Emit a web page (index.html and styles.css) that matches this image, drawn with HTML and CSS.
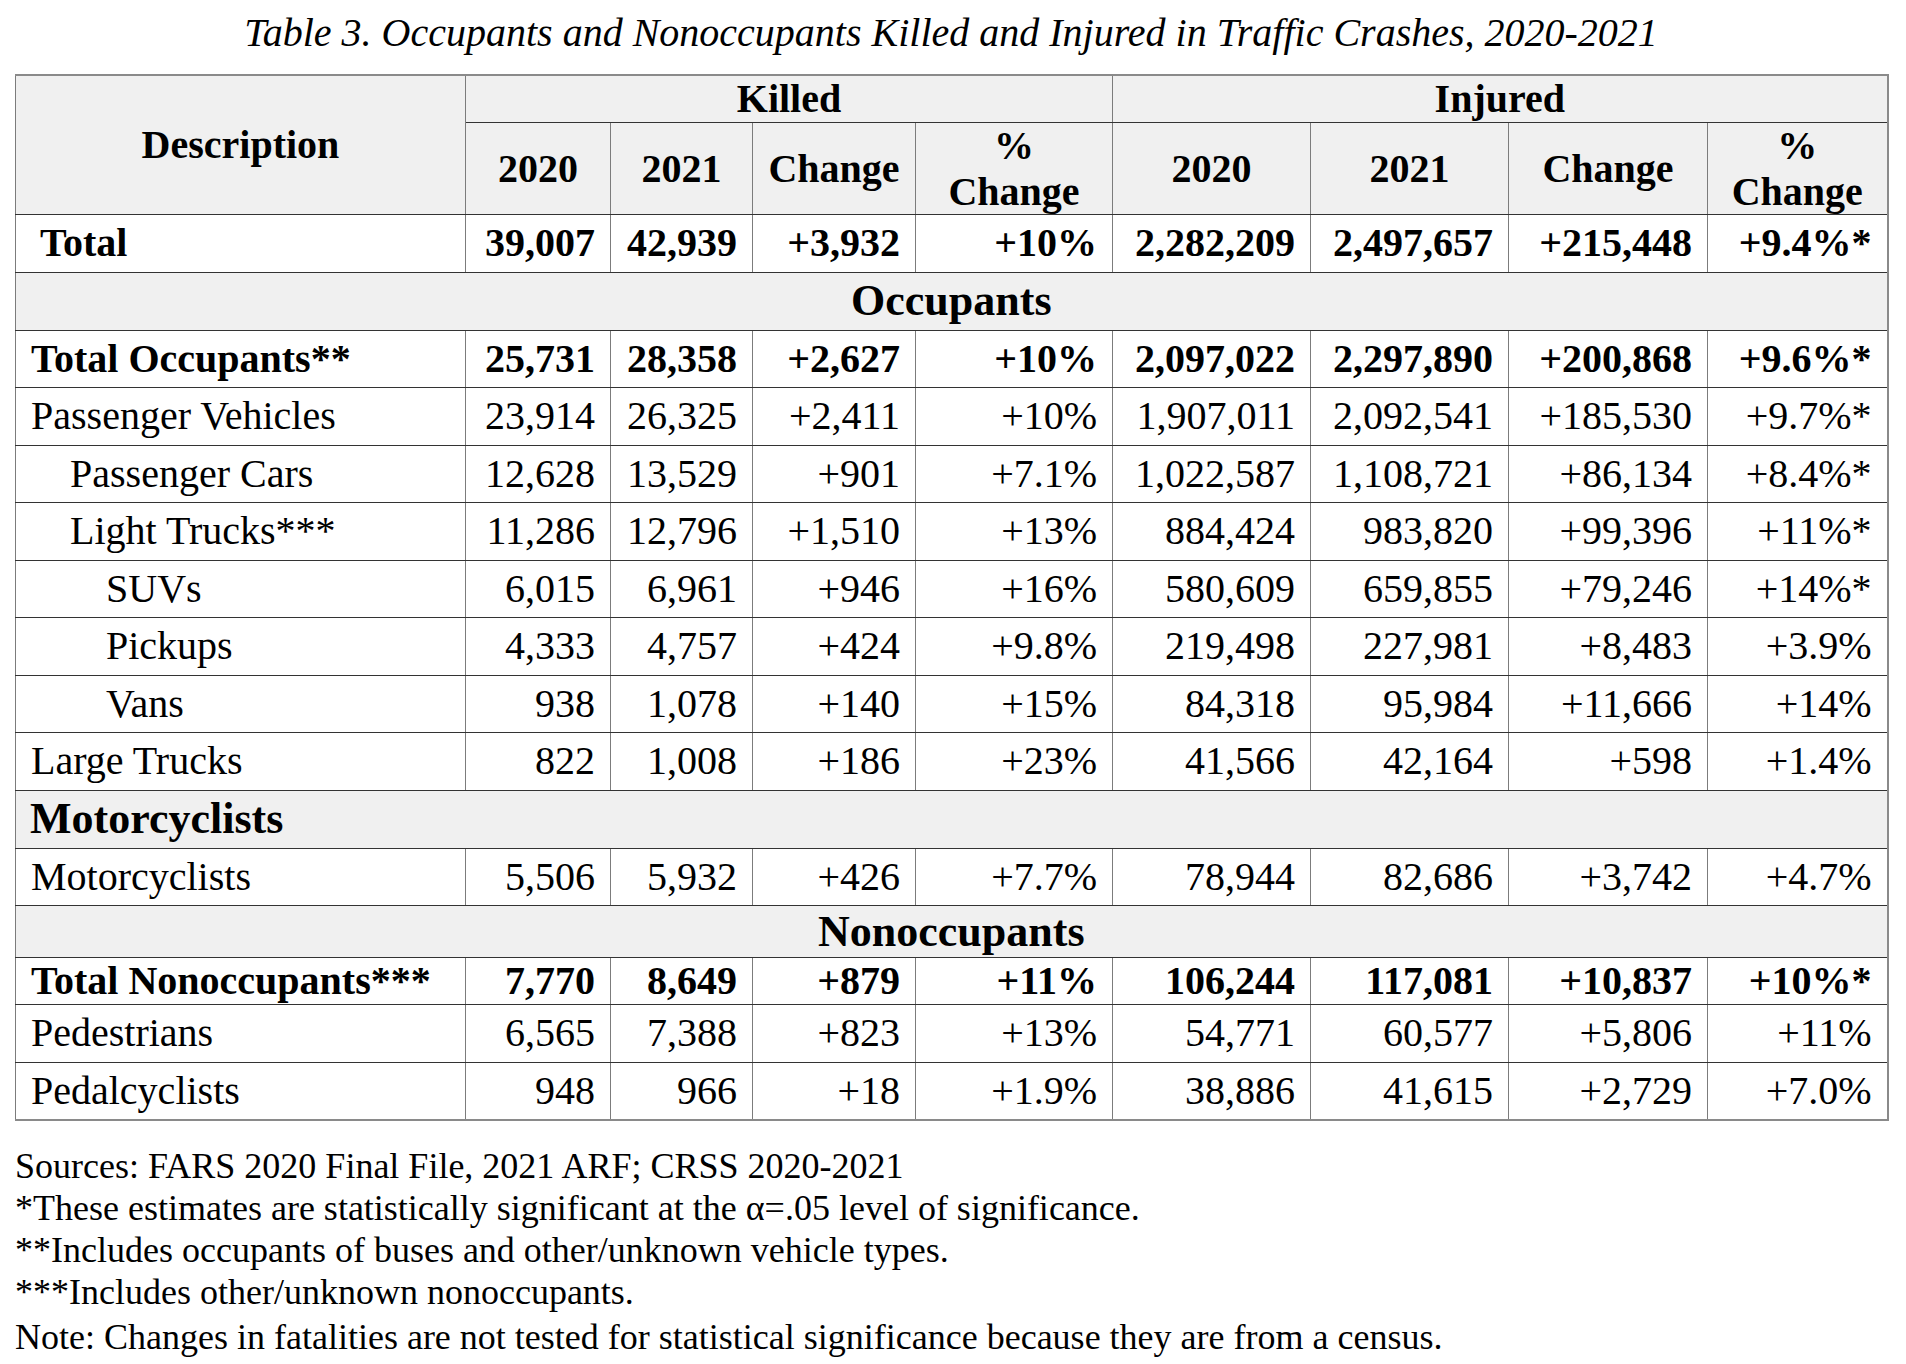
FILE: index.html
```html
<!DOCTYPE html>
<html lang="en">
<head>
  <meta charset="UTF-8" />
  <meta name="viewport" content="width=device-width, initial-scale=1.0" />
  <title>Table 3. Occupants and Nonoccupants Killed and Injured in Traffic Crashes, 2020-2021</title>
  <link rel="stylesheet" href="styles.css">
</head>
<body>
  <div class="page">
    <div class="caption">Table 3. Occupants and Nonoccupants Killed and Injured in Traffic Crashes, 2020-2021</div>

    <table class="crash-table">
      <colgroup>
        <col class="c-desc">
        <col class="c-k20">
        <col class="c-k21">
        <col class="c-kch">
        <col class="c-kpct">
        <col class="c-i20">
        <col class="c-i21">
        <col class="c-ich">
        <col class="c-ipct">
      </colgroup>
      <thead>
        <tr class="head-top">
          <th rowspan="2">Description</th>
          <th colspan="4">Killed</th>
          <th colspan="4">Injured</th>
        </tr>
        <tr class="head-sub">
          <th>2020</th>
          <th>2021</th>
          <th>Change</th>
          <th>%<br>Change</th>
          <th>2020</th>
          <th>2021</th>
          <th>Change</th>
          <th>%<br>Change</th>
        </tr>
      </thead>
      <tbody>
        <tr class="row total">
          <td class="label label-total">Total</td>
          <td>39,007</td><td>42,939</td><td>+3,932</td><td>+10%</td>
          <td>2,282,209</td><td>2,497,657</td><td>+215,448</td><td>+9.4%*</td>
        </tr>

        <tr class="band">
          <td colspan="9" class="band-center">Occupants</td>
        </tr>
        <tr class="row total">
          <td class="label">Total Occupants**</td>
          <td>25,731</td><td>28,358</td><td>+2,627</td><td>+10%</td>
          <td>2,097,022</td><td>2,297,890</td><td>+200,868</td><td>+9.6%*</td>
        </tr>
        <tr class="row">
          <td class="label">Passenger Vehicles</td>
          <td>23,914</td><td>26,325</td><td>+2,411</td><td>+10%</td>
          <td>1,907,011</td><td>2,092,541</td><td>+185,530</td><td>+9.7%*</td>
        </tr>
        <tr class="row">
          <td class="label indent-1">Passenger Cars</td>
          <td>12,628</td><td>13,529</td><td>+901</td><td>+7.1%</td>
          <td>1,022,587</td><td>1,108,721</td><td>+86,134</td><td>+8.4%*</td>
        </tr>
        <tr class="row">
          <td class="label indent-1">Light Trucks***</td>
          <td>11,286</td><td>12,796</td><td>+1,510</td><td>+13%</td>
          <td>884,424</td><td>983,820</td><td>+99,396</td><td>+11%*</td>
        </tr>
        <tr class="row">
          <td class="label indent-2">SUVs</td>
          <td>6,015</td><td>6,961</td><td>+946</td><td>+16%</td>
          <td>580,609</td><td>659,855</td><td>+79,246</td><td>+14%*</td>
        </tr>
        <tr class="row">
          <td class="label indent-2">Pickups</td>
          <td>4,333</td><td>4,757</td><td>+424</td><td>+9.8%</td>
          <td>219,498</td><td>227,981</td><td>+8,483</td><td>+3.9%</td>
        </tr>
        <tr class="row">
          <td class="label indent-2">Vans</td>
          <td>938</td><td>1,078</td><td>+140</td><td>+15%</td>
          <td>84,318</td><td>95,984</td><td>+11,666</td><td>+14%</td>
        </tr>
        <tr class="row">
          <td class="label">Large Trucks</td>
          <td>822</td><td>1,008</td><td>+186</td><td>+23%</td>
          <td>41,566</td><td>42,164</td><td>+598</td><td>+1.4%</td>
        </tr>

        <tr class="band">
          <td colspan="9" class="band-left">Motorcyclists</td>
        </tr>
        <tr class="row">
          <td class="label">Motorcyclists</td>
          <td>5,506</td><td>5,932</td><td>+426</td><td>+7.7%</td>
          <td>78,944</td><td>82,686</td><td>+3,742</td><td>+4.7%</td>
        </tr>

        <tr class="band band-short">
          <td colspan="9" class="band-center">Nonoccupants</td>
        </tr>
        <tr class="row total row-tight">
          <td class="label">Total Nonoccupants***</td>
          <td>7,770</td><td>8,649</td><td>+879</td><td>+11%</td>
          <td>106,244</td><td>117,081</td><td>+10,837</td><td>+10%*</td>
        </tr>
        <tr class="row">
          <td class="label">Pedestrians</td>
          <td>6,565</td><td>7,388</td><td>+823</td><td>+13%</td>
          <td>54,771</td><td>60,577</td><td>+5,806</td><td>+11%</td>
        </tr>
        <tr class="row">
          <td class="label">Pedalcyclists</td>
          <td>948</td><td>966</td><td>+18</td><td>+1.9%</td>
          <td>38,886</td><td>41,615</td><td>+2,729</td><td>+7.0%</td>
        </tr>
      </tbody>
    </table>

    <div class="notes">
      <p>Sources: FARS 2020 Final File, 2021 ARF; CRSS 2020-2021</p>
      <p>*These estimates are statistically significant at the α=.05 level of significance.</p>
      <p>**Includes occupants of buses and other/unknown vehicle types.</p>
      <p>***Includes other/unknown nonoccupants.</p>
      <p class="note-last">Note: Changes in fatalities are not tested for statistical significance because they are from a census.</p>
    </div>
  </div>
</body>
</html>
```

FILE: styles.css
```css
body {
  margin: 0;
  background: #fff;
  color: #000;
  font-family: "Liberation Serif", "Times New Roman", serif;
}
.page {
  padding: 10px 0 0 15px;
  width: 1872px;
}
.caption {
  font-style: italic;
  font-size: 40px;
  line-height: 46px;
  text-align: center;
  margin-bottom: 18px;
}

/* table */
.crash-table {
  width: 1872px;
  table-layout: fixed;
  border-collapse: collapse;
  font-size: 40px;
  line-height: 46px;
  border: 2px solid #8a8a8a;
  border-left: 1px solid #222;
}
.c-desc { width: 450px; }
.c-k20 { width: 145px; }
.c-k21 { width: 142px; }
.c-kch { width: 163px; }
.c-kpct { width: 197px; }
.c-i20 { width: 198px; }
.c-i21 { width: 198px; }
.c-ich { width: 199px; }
.c-ipct { width: 180px; }

.crash-table th,
.crash-table td {
  padding: 0 15px;
  border-left: 1px solid #7c7c7c;
  border-right: 1px solid #7c7c7c;
  border-top: 1px solid #333;
  border-bottom: 1px solid #333;
  white-space: nowrap;
  vertical-align: middle;
}
.crash-table th {
  background: #f0f0f0;
  font-weight: bold;
  text-align: center;
  padding: 0 4px;
}
.head-top th { height: 46px; }
.head-sub th {
  height: 91px;
  line-height: 45.5px;
}

.crash-table td {
  text-align: right;
}
.row td { height: 56.5px; }
.row-tight td { height: 45px; }
.total td { font-weight: bold; }

.crash-table td.label {
  text-align: left;
  padding-left: 15px;
}
.crash-table td.label-total { padding-left: 24px; }
.crash-table td.indent-1 { padding-left: 54px; }
.crash-table td.indent-2 { padding-left: 90px; }

.band td {
  background: #f0f0f0;
  font-weight: bold;
  font-size: 44px;
  height: 57px;
}
.band-short td { height: 51px; }
.crash-table td.band-center { text-align: center; }
.crash-table td.band-left { text-align: left; padding-left: 14px; }

/* footnotes */
.notes {
  margin-top: 24px;
  font-size: 36px;
  line-height: 42px;
}
.notes p {
  margin: 0;
}
.notes .note-last {
  margin-top: 3px;
}
```
